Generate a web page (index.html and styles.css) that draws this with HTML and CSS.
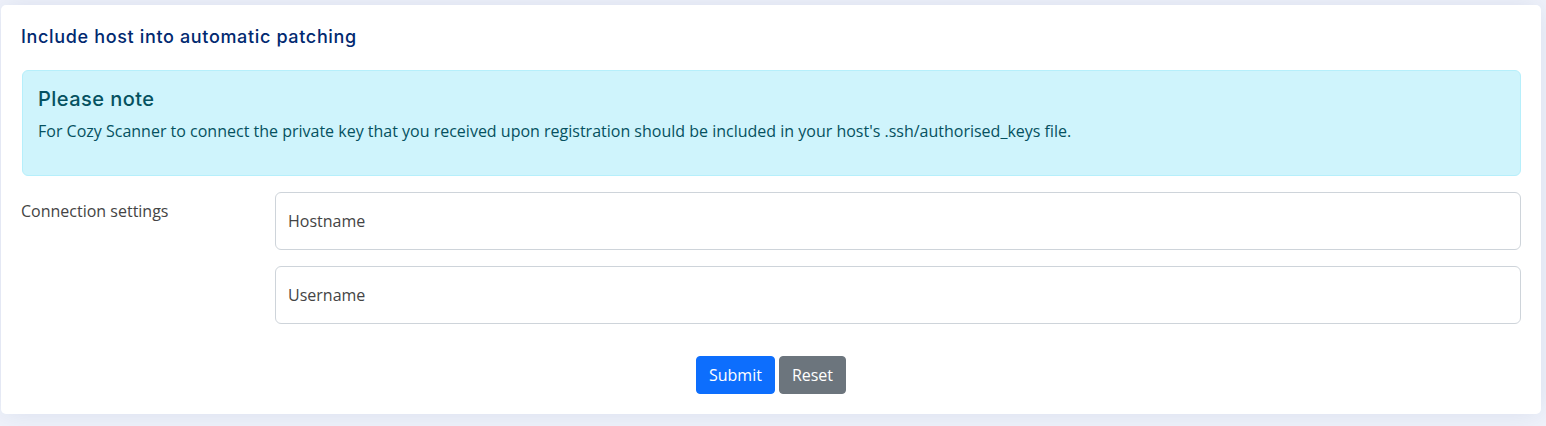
FILE: index.html
```html
<!DOCTYPE html>
<html lang="en">
<head>
<meta charset="utf-8">
<title>Include host into automatic patching</title>
<link rel="stylesheet" href="styles.css">
</head>
<body>
<main class="page">
  <section class="card">
    <h5 class="card-title">Include host into automatic patching</h5>
    <div class="alert">
      <h4 class="alert-heading">Please note</h4>
      <p class="alert-text">For Cozy Scanner to connect the private key that you received upon registration should be included in your host's .ssh/authorised_keys file.</p>
    </div>
    <form class="form">
      <div class="form-row">
        <label class="form-label">Connection settings</label>
        <div class="fields">
          <div class="floating"><input class="input" type="text" placeholder="Hostname"></div>
          <div class="floating"><input class="input" type="text" placeholder="Username"></div>
        </div>
      </div>
      <div class="actions">
        <button type="submit" class="btn btn-primary">Submit</button>
        <button type="reset" class="btn btn-secondary">Reset</button>
      </div>
    </form>
  </section>
</main>
</body>
</html>
```
FILE: styles.css
```css
* { box-sizing: border-box; }
html, body { margin: 0; padding: 0; }
body {
  background: #f0f3fb;
  font-family: "Open Sans", "Noto Sans", sans-serif;
  color: #444444;
  font-size: 16px;
}
.page {
  padding: 5px 5px 12px 1px;
}
.card {
  background: #ffffff;
  border-radius: 5px;
  box-shadow: 0 0 30px rgba(1, 41, 112, 0.1);
  padding: 20px 20px 20px 20px;
  height: 409px;
}
.card-title {
  margin: 0;
  padding: 0;
  font-family: "Inter", "Noto Sans", sans-serif;
  font-size: 18px;
  font-weight: 500;
  letter-spacing: 0.65px;
  color: #012970;
  line-height: 24px;
}
.alert {
  margin: 21px 0 0 1px;
  background: #cff4fc;
  border: 1px solid #b6effb;
  border-radius: 6px;
  color: #055160;
  padding: 16px 16px 16px 15px;
  height: 106px;
}
.alert-heading {
  margin: 0;
  font-family: "Inter", "Noto Sans", sans-serif;
  font-size: 20px;
  font-weight: 500;
  letter-spacing: 0.45px;
  line-height: 24px;
  color: #055160;
}
.alert-text {
  margin: 9px 0 0 0;
  font-size: 16px;
  line-height: 22px;
}
.form {
  margin-top: 16px;
}
.form-row {
  display: grid;
  grid-template-columns: 254px 1fr;
}
.form-label {
  padding-top: 8px;
  font-size: 16px;
  line-height: 22px;
  color: #444444;
}
.fields {
  display: flex;
  flex-direction: column;
  gap: 16px;
}
.input {
  display: block;
  width: 100%;
  height: 58px;
  border: 1px solid #ced4da;
  border-radius: 6px;
  padding: 0 12px;
  font-family: "Open Sans", "Noto Sans", sans-serif;
  font-size: 16px;
  color: #212529;
  background: #fff;
}
.input::placeholder {
  color: #444444;
  opacity: 1;
}
.actions {
  display: flex;
  justify-content: center;
  gap: 4px;
  margin-top: 32px;
}
.btn {
  height: 38px;
  border: 1px solid transparent;
  border-radius: 4px;
  padding: 0 12px;
  font-family: "Open Sans", "Noto Sans", sans-serif;
  font-size: 16px;
  color: #ffffff;
  line-height: 36px;
}
.btn-primary { background: #0d6efd; border-color: #0d6efd; }
.btn-secondary { background: #6c757d; border-color: #6c757d; }
```
